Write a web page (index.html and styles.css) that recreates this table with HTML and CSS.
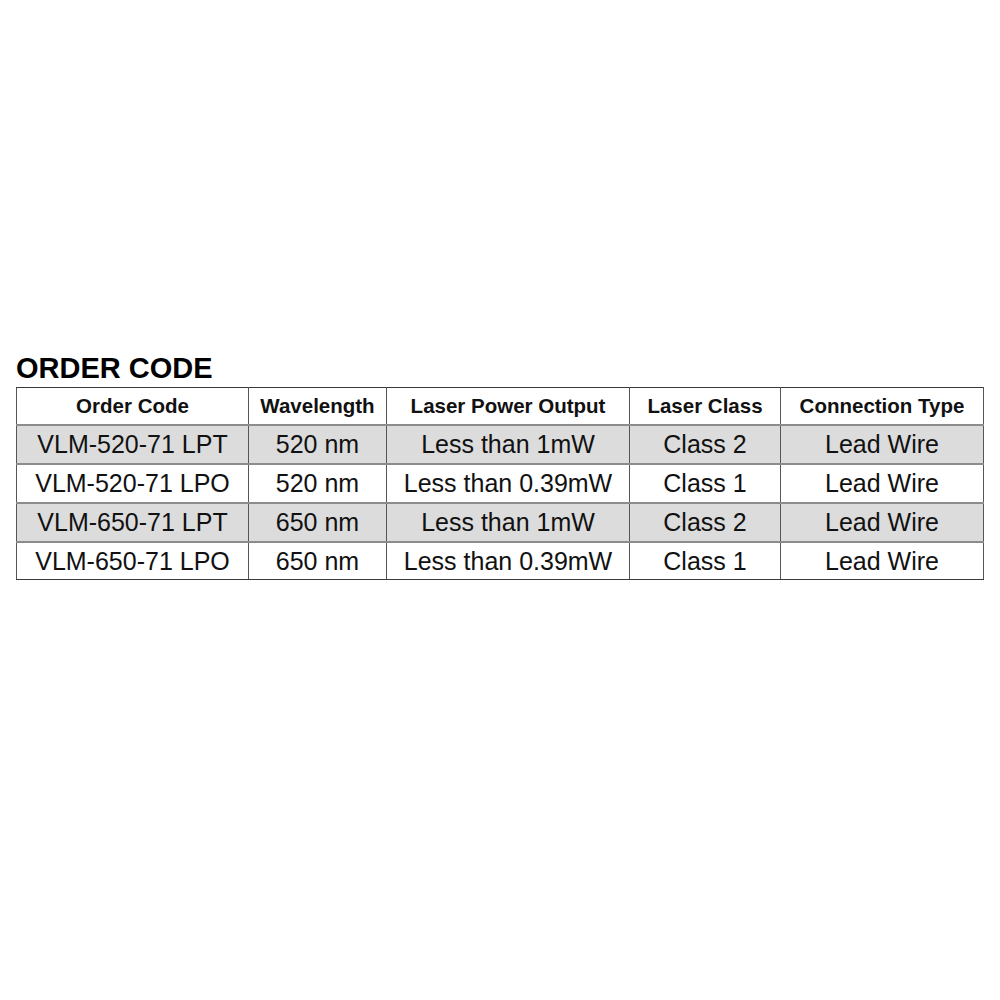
FILE: index.html
```html
<!DOCTYPE html>
<html>
<head>
<meta charset="utf-8">
<link rel="stylesheet" href="styles.css">
</head>
<body>
<div class="page">
  <h1 class="title">ORDER CODE</h1>
  <table class="codes">
    <colgroup>
      <col class="c1"><col class="c2"><col class="c3"><col class="c4"><col class="c5">
    </colgroup>
    <thead>
      <tr><th>Order Code</th><th>Wavelength</th><th>Laser Power Output</th><th>Laser Class</th><th>Connection Type</th></tr>
    </thead>
    <tbody>
      <tr class="shade"><td>VLM-520-71 LPT</td><td>520 nm</td><td>Less than 1mW</td><td>Class 2</td><td>Lead Wire</td></tr>
      <tr><td>VLM-520-71 LPO</td><td>520 nm</td><td>Less than 0.39mW</td><td>Class 1</td><td>Lead Wire</td></tr>
      <tr class="shade"><td>VLM-650-71 LPT</td><td>650 nm</td><td>Less than 1mW</td><td>Class 2</td><td>Lead Wire</td></tr>
      <tr class="last"><td>VLM-650-71 LPO</td><td>650 nm</td><td>Less than 0.39mW</td><td>Class 1</td><td>Lead Wire</td></tr>
    </tbody>
  </table>
</div>
</body>
</html>
```
FILE: styles.css
```css
html, body {
  margin: 0;
  padding: 0;
  background: #ffffff;
}
.page {
  padding: 354px 16px 0 16px;
  font-family: "Liberation Sans", Arial, sans-serif;
  color: #111111;
}
.title {
  margin: 0 0 4px 0;
  font-size: 29px;
  line-height: 29px;
  font-weight: bold;
  color: #000;
}
.codes {
  width: 967px;
  border-collapse: collapse;
  table-layout: fixed;
  border: 1px solid #3a3a3a;
}
.c1 { width: 232px; }
.c2 { width: 138px; }
.c3 { width: 243px; }
.c4 { width: 151px; }
.c5 { width: 203px; }
.codes th, .codes td {
  padding: 0;
  text-align: center;
  vertical-align: middle;
  border-left: 1px solid #555555;
  border-right: 1px solid #555555;
  border-top: 2px solid #8c8c8c;
  border-bottom: 2px solid #8c8c8c;
  white-space: nowrap;
}
.codes th {
  font-size: 20.5px;
  font-weight: bold;
  height: 36px;
  border-top: 1px solid #3a3a3a;
}
.codes td {
  font-size: 25px;
  height: 37px;
}
.codes .last td {
  height: 36px;
  border-bottom: 1px solid #3a3a3a;
}
.shade td {
  background: #dcdcdc;
}
```
